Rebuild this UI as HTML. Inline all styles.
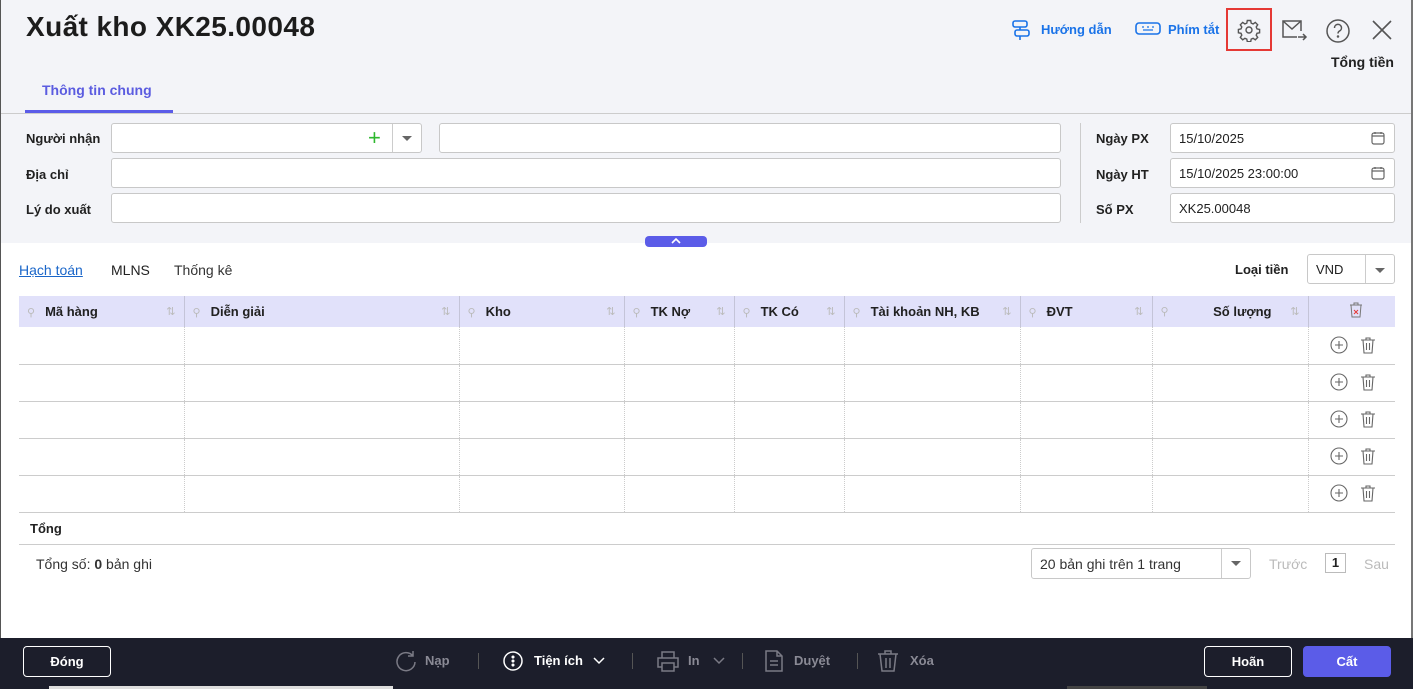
<!DOCTYPE html><html><head><meta charset="utf-8"><style>
*{box-sizing:border-box;margin:0;padding:0}
body{width:1413px;height:689px;overflow:hidden;font-family:"Liberation Sans",sans-serif;font-size:13px;color:#212121;background:#fff;position:relative}
.abs{position:absolute}
.top{left:0;top:0;width:1413px;height:243px;background:#f3f4f8;border-left:1px solid #555}
.inp{position:absolute;background:#fff;border:1px solid #c8c8c8;border-radius:3px;height:30px;font-size:13px;padding:7px 8px}
.lbl{position:absolute;font-weight:bold;font-size:13px}
table{position:absolute;left:19px;top:296px;width:1376px;border-collapse:collapse}
th{background:#e1e1fa;height:31px;text-align:left;font-size:13px;font-weight:bold;border-right:1px solid #c4c4d8;padding-left:8px;position:relative}
td{height:37px;border-bottom:1px solid #ccc;border-right:1px dotted #ccc}
th .s{position:absolute;right:8px;top:9px;color:#bbb;font-size:11px;font-weight:normal}
th .p{color:#bbb;font-weight:normal;margin-right:10px;font-size:11px}
.foot{left:0;top:638px;width:1413px;height:51px;background:#1c1e2b}
.btn{position:absolute;border:1px solid #fff;border-radius:4px;color:#fff;font-weight:bold;text-align:center;line-height:29px;height:31px}
.ft{position:absolute;top:653px;color:#8a8a95;font-weight:bold;font-size:13px}
</style></head><body>
<div class="abs top"></div>
<div class="abs" style="left:26px;top:11px;font-size:28px;letter-spacing:0.4px;font-weight:bold;color:#1c1c1c">Xuất kho XK25.00048</div>
<svg class="abs" style="left:1010px;top:19px" width="22" height="22" viewBox="0 0 22 22" fill="none" stroke="#1a73e8" stroke-width="1.6"><rect x="3" y="2" width="14" height="6" rx="2"/><rect x="5" y="11" width="14" height="6" rx="2"/><path d="M10 8v3M10 17v4"/></svg>
<div class="abs" style="left:1041px;top:22px;color:#1a73e8;font-weight:bold">Hướng dẫn</div>
<svg class="abs" style="left:1135px;top:21px" width="26" height="16" viewBox="0 0 26 16" fill="none" stroke="#1a73e8" stroke-width="1.6"><rect x="1" y="2" width="24" height="11" rx="3"/><path d="M7 6h2M12 6h2M17 6h2M8 9h10" stroke-width="1.3"/></svg>
<div class="abs" style="left:1168px;top:22px;color:#1a73e8;font-weight:bold">Phím tắt</div>
<div class="abs" style="left:1226px;top:8px;width:46px;height:43px;border:2px solid #e53935"></div>
<svg class="abs" style="left:1237px;top:18px" width="24" height="24" viewBox="0 0 24 24" fill="none" stroke="#555" stroke-width="1.4"><circle cx="12" cy="12" r="3"/><path d="M10.3 2.5h3.4l.5 2.6 1.9.8 2.2-1.5 2.4 2.4-1.5 2.2.8 1.9 2.6.5v3.4l-2.6.5-.8 1.9 1.5 2.2-2.4 2.4-2.2-1.5-1.9.8-.5 2.6h-3.4l-.5-2.6-1.9-.8-2.2 1.5-2.4-2.4 1.5-2.2-.8-1.9-2.6-.5v-3.4l2.6-.5.8-1.9-1.5-2.2 2.4-2.4 2.2 1.5 1.9-.8z"/></svg>
<svg class="abs" style="left:1282px;top:18px" width="26" height="24" viewBox="0 0 26 24" fill="none" stroke="#555" stroke-width="1.5"><path d="M19 13V3H1v16h14"/><path d="M1 3l9 8 9-8"/><path d="M16 19h8M21 16l3 3-3 3"/></svg>
<svg class="abs" style="left:1325px;top:18px" width="26" height="26" viewBox="0 0 26 26" fill="none" stroke="#555" stroke-width="1.5"><circle cx="13" cy="13" r="11"/><path d="M9.5 10a3.5 3.5 0 1 1 5 3c-1 .6-1.5 1.2-1.5 2.5"/><circle cx="13" cy="18.5" r=".5" fill="#555"/></svg>
<svg class="abs" style="left:1371px;top:19px" width="22" height="22" viewBox="0 0 22 22" stroke="#555" stroke-width="1.6"><path d="M2 2l18 18M20 2L2 20"/></svg>
<div class="abs" style="left:1331px;top:54px;font-size:14px;font-weight:bold;color:#222">Tổng tiền</div>
<div class="abs" style="left:42px;top:82px;color:#5b5ce0;font-weight:bold;font-size:14px">Thông tin chung</div>
<div class="abs" style="left:25px;top:110px;width:148px;height:3px;background:#5b5ce8"></div>
<div class="abs" style="left:1px;top:113px;width:1412px;height:1px;background:#ccc"></div>
<div class="lbl" style="left:26px;top:131px">Người nhận</div>
<div class="lbl" style="left:26px;top:167px">Địa chỉ</div>
<div class="lbl" style="left:26px;top:202px">Lý do xuất</div>
<div class="inp" style="left:111px;top:123px;width:311px"></div>
<div class="abs" style="left:368px;top:124px;color:#2eb82e;font-size:22px;line-height:28px">+</div>
<div class="abs" style="left:392px;top:124px;width:1px;height:28px;background:#ccc"></div>
<div class="abs" style="left:402px;top:136px;border-left:5px solid transparent;border-right:5px solid transparent;border-top:5px solid #666"></div>
<div class="inp" style="left:439px;top:123px;width:622px"></div>
<div class="inp" style="left:111px;top:158px;width:950px"></div>
<div class="inp" style="left:111px;top:193px;width:950px"></div>
<div class="abs" style="left:1080px;top:123px;width:1px;height:100px;background:#ccc"></div>
<div class="lbl" style="left:1096px;top:131px">Ngày PX</div>
<div class="lbl" style="left:1096px;top:167px">Ngày HT</div>
<div class="lbl" style="left:1096px;top:202px">Số PX</div>
<div class="inp" style="left:1170px;top:123px;width:225px">15/10/2025</div>
<div class="inp" style="left:1170px;top:158px;width:225px">15/10/2025 23:00:00</div>
<div class="inp" style="left:1170px;top:193px;width:225px">XK25.00048</div>
<svg class="abs" style="left:1371px;top:131px" width="14" height="14" viewBox="0 0 14 14" fill="none" stroke="#666" stroke-width="1.2"><rect x="1" y="2" width="12" height="11" rx="2"/><path d="M1 5h12M4 1v2M10 1v2"/></svg>
<svg class="abs" style="left:1371px;top:166px" width="14" height="14" viewBox="0 0 14 14" fill="none" stroke="#666" stroke-width="1.2"><rect x="1" y="2" width="12" height="11" rx="2"/><path d="M1 5h12M4 1v2M10 1v2"/></svg>
<div class="abs" style="left:645px;top:236px;width:62px;height:11px;background:#5b5ce8;border-radius:4px"></div>
<svg class="abs" style="left:670px;top:237px" width="12" height="8" viewBox="0 0 12 8" fill="none" stroke="#fff" stroke-width="1.6"><path d="M2 6l4-4 4 4"/></svg>
<div class="abs" style="left:19px;top:262px;color:#1a66c9;text-decoration:underline;font-size:14px">Hạch toán</div>
<div class="abs" style="left:111px;top:262px;font-size:14px">MLNS</div>
<div class="abs" style="left:174px;top:262px;font-size:14px;color:#333">Thống kê</div>
<div class="abs" style="left:1235px;top:262px;font-weight:bold">Loại tiền</div>
<div class="inp" style="left:1307px;top:254px;width:88px">VND</div>
<div class="abs" style="left:1365px;top:255px;width:1px;height:28px;background:#ccc"></div>
<div class="abs" style="left:1375px;top:268px;border-left:5px solid transparent;border-right:5px solid transparent;border-top:5px solid #666"></div>
<table>
<tr><th style="width:165px"><span class="p">⚲</span>Mã hàng<span class="s">⇅</span></th><th style="width:275px"><span class="p">⚲</span>Diễn giải<span class="s">⇅</span></th><th style="width:165px"><span class="p">⚲</span>Kho<span class="s">⇅</span></th><th style="width:110px"><span class="p">⚲</span>TK Nợ<span class="s">⇅</span></th><th style="width:110px"><span class="p">⚲</span>TK Có<span class="s">⇅</span></th><th style="width:176px"><span class="p">⚲</span>Tài khoản NH, KB<span class="s">⇅</span></th><th style="width:132px"><span class="p">⚲</span>ĐVT<span class="s">⇅</span></th><th style="width:156px;text-align:right;padding-right:36px"><span class="p" style="position:absolute;left:8px;top:9px">⚲</span>Số lượng<span class="s">⇅</span></th><th style="border-right:none;text-align:center"><svg width="14" height="16" viewBox="0 0 14 16" fill="none" stroke="#777" stroke-width="1"><path d="M1 3h12M5 3V1h4v2M2 3l1 12h8l1-12"/><path d="M5 8l4 4M9 8l-4 4" stroke="#e53935"/></svg></th></tr>
<tr><td></td><td></td><td></td><td></td><td></td><td></td><td></td><td></td><td style="border-right:none"></td></tr>
<tr><td></td><td></td><td></td><td></td><td></td><td></td><td></td><td></td><td style="border-right:none"></td></tr>
<tr><td></td><td></td><td></td><td></td><td></td><td></td><td></td><td></td><td style="border-right:none"></td></tr>
<tr><td></td><td></td><td></td><td></td><td></td><td></td><td></td><td></td><td style="border-right:none"></td></tr>
<tr><td></td><td></td><td></td><td></td><td></td><td></td><td></td><td></td><td style="border-right:none"></td></tr>
</table>
<div class="abs" style="left:1330px;top:331px;line-height:37px">
<div style="height:37px"><svg width="18" height="18" viewBox="0 0 18 18" fill="none" stroke="#666" stroke-width="1.1"><circle cx="9" cy="9" r="8"/><path d="M9 5v8M5 9h8"/></svg><svg style="margin-left:12px" width="16" height="18" viewBox="0 0 16 18" fill="none" stroke="#666" stroke-width="1.1"><path d="M1 4h14M6 4V2h4v2M3 4l1 13h8l1-13M6.5 7v7M9.5 7v7"/></svg></div>
<div style="height:37px"><svg width="18" height="18" viewBox="0 0 18 18" fill="none" stroke="#666" stroke-width="1.1"><circle cx="9" cy="9" r="8"/><path d="M9 5v8M5 9h8"/></svg><svg style="margin-left:12px" width="16" height="18" viewBox="0 0 16 18" fill="none" stroke="#666" stroke-width="1.1"><path d="M1 4h14M6 4V2h4v2M3 4l1 13h8l1-13M6.5 7v7M9.5 7v7"/></svg></div>
<div style="height:37px"><svg width="18" height="18" viewBox="0 0 18 18" fill="none" stroke="#666" stroke-width="1.1"><circle cx="9" cy="9" r="8"/><path d="M9 5v8M5 9h8"/></svg><svg style="margin-left:12px" width="16" height="18" viewBox="0 0 16 18" fill="none" stroke="#666" stroke-width="1.1"><path d="M1 4h14M6 4V2h4v2M3 4l1 13h8l1-13M6.5 7v7M9.5 7v7"/></svg></div>
<div style="height:37px"><svg width="18" height="18" viewBox="0 0 18 18" fill="none" stroke="#666" stroke-width="1.1"><circle cx="9" cy="9" r="8"/><path d="M9 5v8M5 9h8"/></svg><svg style="margin-left:12px" width="16" height="18" viewBox="0 0 16 18" fill="none" stroke="#666" stroke-width="1.1"><path d="M1 4h14M6 4V2h4v2M3 4l1 13h8l1-13M6.5 7v7M9.5 7v7"/></svg></div>
<div style="height:37px"><svg width="18" height="18" viewBox="0 0 18 18" fill="none" stroke="#666" stroke-width="1.1"><circle cx="9" cy="9" r="8"/><path d="M9 5v8M5 9h8"/></svg><svg style="margin-left:12px" width="16" height="18" viewBox="0 0 16 18" fill="none" stroke="#666" stroke-width="1.1"><path d="M1 4h14M6 4V2h4v2M3 4l1 13h8l1-13M6.5 7v7M9.5 7v7"/></svg></div>
</div>
<div class="abs" style="left:30px;top:521px;font-weight:bold">Tổng</div>
<div class="abs" style="left:19px;top:544px;width:1376px;height:1px;background:#ccc"></div>
<div class="abs" style="left:36px;top:556px;font-size:14px;color:#333">Tổng số: <b>0</b> bản ghi</div>
<div class="inp" style="left:1031px;top:548px;width:220px;height:31px;font-size:14px;color:#333">20 bản ghi trên 1 trang</div>
<div class="abs" style="left:1221px;top:549px;width:1px;height:29px;background:#ccc"></div>
<div class="abs" style="left:1231px;top:561px;border-left:5px solid transparent;border-right:5px solid transparent;border-top:5px solid #666"></div>
<div class="abs" style="left:1269px;top:556px;color:#bbb;font-size:14px">Trước</div>
<div class="abs" style="left:1325px;top:553px;width:21px;height:20px;border:1px solid #bbb;text-align:center;font-weight:bold;line-height:18px">1</div>
<div class="abs" style="left:1364px;top:556px;color:#bbb;font-size:14px">Sau</div>
<div class="abs" style="left:1411px;top:0;width:2px;height:638px;background:#777"></div>
<div class="abs" style="left:0;top:0;width:1px;height:638px;background:#555"></div>
<div class="abs foot"></div>
<div class="btn" style="left:23px;top:646px;width:88px">Đóng</div>
<svg class="abs" style="left:395px;top:650px" width="22" height="22" viewBox="0 0 22 22" fill="none" stroke="#7a7a85" stroke-width="1.5"><path d="M18 6A9 9 0 1 0 20 12M18 1v5h-5"/></svg>
<div class="ft" style="left:425px">Nạp</div>
<div class="abs" style="left:478px;top:653px;width:1px;height:16px;background:#555"></div>
<svg class="abs" style="left:503px;top:651px" width="20" height="20" viewBox="0 0 20 20" fill="none" stroke="#fff" stroke-width="1.5"><circle cx="10" cy="10" r="9"/><circle cx="10" cy="6" r=".8" fill="#fff"/><circle cx="10" cy="10" r=".8" fill="#fff"/><circle cx="10" cy="14" r=".8" fill="#fff"/></svg>
<div class="ft" style="left:534px;color:#fff">Tiện ích</div>
<svg class="abs" style="left:593px;top:657px" width="12" height="8" viewBox="0 0 12 8" fill="none" stroke="#fff" stroke-width="1.5"><path d="M1 1l5 5 5-5"/></svg>
<div class="abs" style="left:632px;top:653px;width:1px;height:16px;background:#555"></div>
<svg class="abs" style="left:657px;top:651px" width="22" height="21" viewBox="0 0 22 21" fill="none" stroke="#7a7a85" stroke-width="1.5"><path d="M5 7V1h12v6M5 16H1V7h20v9h-4M5 12h12v8H5z"/></svg>
<div class="ft" style="left:688px">In</div>
<svg class="abs" style="left:713px;top:657px" width="12" height="8" viewBox="0 0 12 8" fill="none" stroke="#7a7a85" stroke-width="1.5"><path d="M1 1l5 5 5-5"/></svg>
<div class="abs" style="left:742px;top:653px;width:1px;height:16px;background:#555"></div>
<svg class="abs" style="left:765px;top:650px" width="18" height="22" viewBox="0 0 18 22" fill="none" stroke="#7a7a85" stroke-width="1.5"><path d="M1 1h11l5 5v15H1zM12 1v5h5M5 11h8M5 15h8"/></svg>
<div class="ft" style="left:794px">Duyệt</div>
<div class="abs" style="left:857px;top:653px;width:1px;height:16px;background:#555"></div>
<svg class="abs" style="left:877px;top:650px" width="22" height="22" viewBox="0 0 22 22" fill="none" stroke="#7a7a85" stroke-width="1.5"><path d="M1 4h20M8 4V1h6v3M3 4l2 17h12l2-17M9 8v10M13 8v10"/></svg>
<div class="ft" style="left:910px">Xóa</div>
<div class="btn" style="left:1204px;top:646px;width:88px">Hoãn</div>
<div class="btn" style="left:1303px;top:646px;width:88px;background:#5b5ce8;border-color:#5b5ce8">Cất</div>
<div class="abs" style="left:49px;top:686px;width:344px;height:3px;background:#ddd"></div>
<div class="abs" style="left:1067px;top:686px;width:140px;height:3px;background:#444"></div>
</body></html>
